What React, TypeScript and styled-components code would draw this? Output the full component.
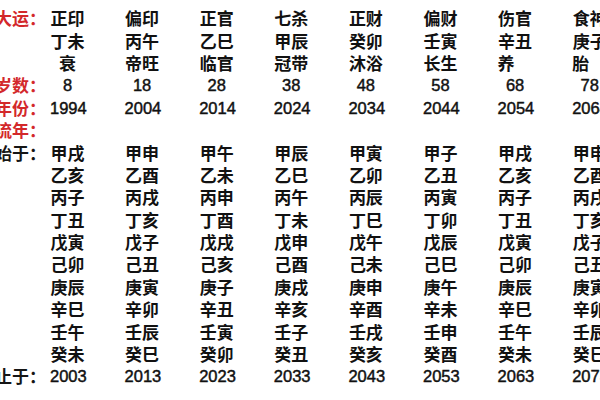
import styled, { createGlobalStyle } from "styled-components";

const GlobalStyle = createGlobalStyle`
  html, body {
    margin: 0;
    padding: 0;
    background: #ffffff;
  }
  body {
    font-family: "Noto Sans CJK SC", "Noto Sans", sans-serif;
    color: #111111;
    overflow: hidden;
  }
`;

type Column = {
  god: string;
  pillar: string;
  stage: string;
  stageLeft?: boolean;
  age: number;
  start: number;
  years: string[];
  end: number;
};

const cycle = (branches: string[]) =>
  ["甲", "乙", "丙", "丁", "戊", "己", "庚", "辛", "壬", "癸"].map(
    (stem, i) => stem + branches[i]
  );

const columns: Column[] = [
  { god: "正印", pillar: "丁未", stage: "衰", age: 8, start: 1994, end: 2003,
    years: cycle(["戌", "亥", "子", "丑", "寅", "卯", "辰", "巳", "午", "未"]) },
  { god: "偏印", pillar: "丙午", stage: "帝旺", age: 18, start: 2004, end: 2013,
    years: cycle(["申", "酉", "戌", "亥", "子", "丑", "寅", "卯", "辰", "巳"]) },
  { god: "正官", pillar: "乙巳", stage: "临官", age: 28, start: 2014, end: 2023,
    years: cycle(["午", "未", "申", "酉", "戌", "亥", "子", "丑", "寅", "卯"]) },
  { god: "七杀", pillar: "甲辰", stage: "冠带", age: 38, start: 2024, end: 2033,
    years: cycle(["辰", "巳", "午", "未", "申", "酉", "戌", "亥", "子", "丑"]) },
  { god: "正财", pillar: "癸卯", stage: "沐浴", age: 48, start: 2034, end: 2043,
    years: cycle(["寅", "卯", "辰", "巳", "午", "未", "申", "酉", "戌", "亥"]) },
  { god: "偏财", pillar: "壬寅", stage: "长生", age: 58, start: 2044, end: 2053,
    years: cycle(["子", "丑", "寅", "卯", "辰", "巳", "午", "未", "申", "酉"]) },
  { god: "伤官", pillar: "辛丑", stage: "养", stageLeft: true, age: 68, start: 2054, end: 2063,
    years: cycle(["戌", "亥", "子", "丑", "寅", "卯", "辰", "巳", "午", "未"]) },
  { god: "食神", pillar: "庚子", stage: "胎", stageLeft: true, age: 78, start: 2064, end: 2073,
    years: cycle(["申", "酉", "戌", "亥", "子", "丑", "寅", "卯", "辰", "巳"]) },
];

const Sheet = styled.div`
  padding-top: 7px;
  width: 600px;
  height: 400px;
  overflow: hidden;
`;

const Row = styled.div`
  display: grid;
  grid-template-columns: 50px repeat(8, 74.6px);
  height: 22.4px;
  align-items: center;
  font-size: 17px;
  line-height: 22px;
  white-space: nowrap;
`;

const Label = styled.div<{ $red?: boolean }>`
  display: flex;
  justify-content: flex-end;
  padding-right: 4px;
  font-weight: 700;
  color: ${(p) => (p.$red ? "#d3282b" : "#151515")};
`;

const Cell = styled.div<{ $left?: boolean }>`
  width: 35px;
  text-align: ${(p) => (p.$left ? "left" : "center")};
  font-weight: 600;
`;

const Num = styled(Cell)`
  font-family: "Liberation Sans", "Noto Sans", sans-serif;
  font-size: 16.5px;
  font-weight: 400;
  -webkit-text-stroke: 0.45px #111111;
`;

type Line = {
  label?: string;
  red?: boolean;
  numeric?: boolean;
  value: (c: Column) => string | number;
  left?: (c: Column) => boolean;
};

const lines: Line[] = [
  { label: "大运：", red: true, value: (c) => c.god },
  { value: (c) => c.pillar },
  { value: (c) => c.stage, left: (c) => !!c.stageLeft },
  { label: "岁数：", red: true, numeric: true, value: (c) => c.age },
  { label: "年份：", red: true, numeric: true, value: (c) => c.start },
  { label: "流年：", red: true, value: () => "" },
  ...Array.from({ length: 10 }, (_, i): Line => ({
    label: i === 0 ? "始于：" : undefined,
    value: (c) => c.years[i],
  })),
  { label: "止于：", numeric: true, value: (c) => c.end },
];

const App: React.FC = () => {
  return (
    <>
      <GlobalStyle />
      <Sheet>
        {lines.map((line, r) => (
          <Row key={r}>
            <Label $red={line.red}>{line.label ?? ""}</Label>
            {columns.map((c, i) =>
              line.numeric ? (
                <Num key={i}>{line.value(c)}</Num>
              ) : (
                <Cell key={i} $left={line.left?.(c)}>
                  {line.value(c)}
                </Cell>
              )
            )}
          </Row>
        ))}
      </Sheet>
    </>
  );
};

export default App;
